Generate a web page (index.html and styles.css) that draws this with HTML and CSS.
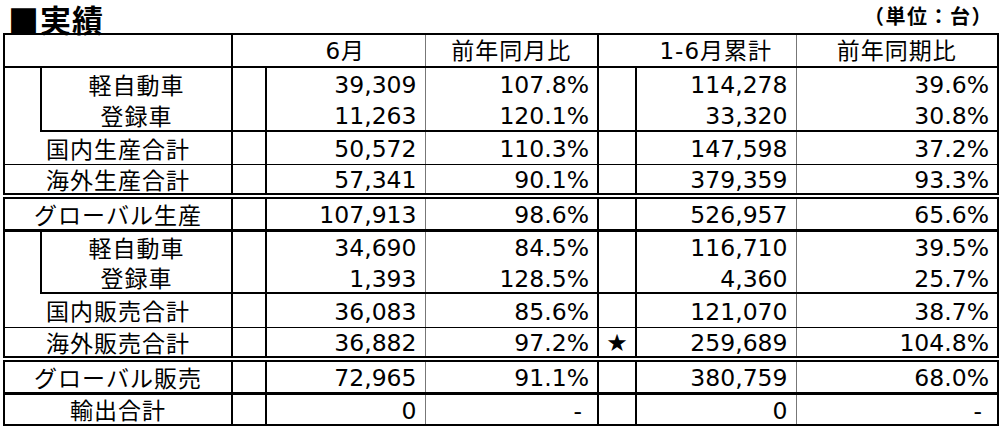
FILE: index.html
```html
<!DOCTYPE html>
<html lang="ja">
<head>
<meta charset="utf-8">
<title>実績</title>
<link rel="stylesheet" href="styles.css">
</head>
<body>
<div class="page">
  <div class="head">
    <h1 class="title">■実績</h1>
    <div class="unit">（単位：台）</div>
  </div>
  <table class="results">
    <colgroup>
      <col class="c-indent">
      <col class="c-label">
      <col class="c-gap">
      <col class="c-val">
      <col class="c-pct">
      <col class="c-star">
      <col class="c-cum">
      <col class="c-cpct">
    </colgroup>
    <thead>
      <tr class="h-33 sep-grp">
        <th colspan="2" class="lbl"></th>
        <th class="gap-h"></th>
        <th class="hd val">6月</th>
        <th class="hd pct">前年同月比</th>
        <th class="gap-h2"></th>
        <th class="hd val">1-6月累計</th>
        <th class="hd last">前年同期比</th>
      </tr>
    </thead>
    <tbody>
      <tr class="h-32">
        <td rowspan="2" class="indent"></td>
        <td class="lbl">軽自動車</td>
        <td rowspan="2" class="gap grp-bottom"></td>
        <td class="num val">39,309</td>
        <td class="num pct">107.8%</td>
        <td rowspan="2" class="gap grp-bottom"></td>
        <td class="num val">114,278</td>
        <td class="num last">39.6%</td>
      </tr>
      <tr class="h-32 sep-grp">
        <td class="lbl">登録車</td>
        <td class="num val">11,263</td>
        <td class="num pct">120.1%</td>
        <td class="num val">33,320</td>
        <td class="num last">30.8%</td>
      </tr>
      <tr class="h-33 sep-thin">
        <td colspan="2" class="lbl">国内生産合計</td>
        <td class="gap"></td>
        <td class="num val">50,572</td>
        <td class="num pct">110.3%</td>
        <td class="gap"></td>
        <td class="num val">147,598</td>
        <td class="num last">37.2%</td>
      </tr>
      <tr class="h-32 sep-double">
        <td colspan="2" class="lbl">海外生産合計</td>
        <td class="gap"></td>
        <td class="num val">57,341</td>
        <td class="num pct">90.1%</td>
        <td class="gap"></td>
        <td class="num val">379,359</td>
        <td class="num last">93.3%</td>
      </tr>
      <tr class="h-34 sep-thick">
        <td colspan="2" class="lbl">グローバル生産</td>
        <td class="gap"></td>
        <td class="num val">107,913</td>
        <td class="num pct">98.6%</td>
        <td class="gap"></td>
        <td class="num val">526,957</td>
        <td class="num last">65.6%</td>
      </tr>
      <tr class="h-32">
        <td rowspan="2" class="indent"></td>
        <td class="lbl">軽自動車</td>
        <td rowspan="2" class="gap grp-bottom"></td>
        <td class="num val">34,690</td>
        <td class="num pct">84.5%</td>
        <td rowspan="2" class="gap grp-bottom"></td>
        <td class="num val">116,710</td>
        <td class="num last">39.5%</td>
      </tr>
      <tr class="h-31 sep-grp">
        <td class="lbl">登録車</td>
        <td class="num val">1,393</td>
        <td class="num pct">128.5%</td>
        <td class="num val">4,360</td>
        <td class="num last">25.7%</td>
      </tr>
      <tr class="h-34 sep-thin">
        <td colspan="2" class="lbl">国内販売合計</td>
        <td class="gap"></td>
        <td class="num val">36,083</td>
        <td class="num pct">85.6%</td>
        <td class="gap"></td>
        <td class="num val">121,070</td>
        <td class="num last">38.7%</td>
      </tr>
      <tr class="h-32 sep-double">
        <td colspan="2" class="lbl">海外販売合計</td>
        <td class="gap"></td>
        <td class="num val">36,882</td>
        <td class="num pct">97.2%</td>
        <td class="gap mark">★</td>
        <td class="num val">259,689</td>
        <td class="num last">104.8%</td>
      </tr>
      <tr class="h-34 sep-thick">
        <td colspan="2" class="lbl">グローバル販売</td>
        <td class="gap"></td>
        <td class="num val">72,965</td>
        <td class="num pct">91.1%</td>
        <td class="gap"></td>
        <td class="num val">380,759</td>
        <td class="num last">68.0%</td>
      </tr>
      <tr class="h-32">
        <td colspan="2" class="lbl">輸出合計</td>
        <td class="gap"></td>
        <td class="num val">0</td>
        <td class="num pct dash">-</td>
        <td class="gap"></td>
        <td class="num val">0</td>
        <td class="num last dash">-</td>
      </tr>
    </tbody>
  </table>
</div>
</body>
</html>
```

FILE: styles.css
```css
html, body {
  margin: 0;
  padding: 0;
  background: #ffffff;
  color: #000000;
}

.page {
  width: 1000px;
  height: 430px;
  padding-left: 3px;
  box-sizing: border-box;
  overflow: hidden;
}

.head {
  display: flex;
  justify-content: space-between;
  align-items: flex-end;
  width: 994px;
}

.title {
  margin: 0 0 -5px 5px;
  font-family: "Noto Sans CJK JP", sans-serif;
  font-weight: 700;
  font-size: 31px;
  line-height: 38px;
  letter-spacing: 1px;
}

.unit {
  font-family: "Noto Sans CJK JP", sans-serif;
  font-weight: 700;
  font-size: 20px;
  line-height: 29px;
  letter-spacing: 1.5px;
  margin-right: 4px;
  margin-bottom: 3px;
}

.results {
  border-collapse: collapse;
  table-layout: fixed;
  width: 994px;
  border: 2px solid #000;
}

.c-indent { width: 37px; }
.c-label { width: 191px; }
.c-gap { width: 34px; }
.c-val { width: 159px; }
.c-pct { width: 173px; }
.c-star { width: 38px; }
.c-cum { width: 160px; }
.c-cpct { width: 202px; }

.results th,
.results td {
  padding: 0;
  font-weight: 400;
  white-space: nowrap;
  line-height: 24px;
  vertical-align: middle;
}

.h-31 { height: 31px; }
.h-32 { height: 32px; }
.h-33 { height: 33px; }
.h-34 { height: 34px; }

.lbl {
  font-family: "Noto Sans CJK JP", sans-serif;
  font-size: 23px;
  letter-spacing: 1px;
  text-align: center;
  border-right: 2px solid #000;
  padding-top: 2px;
}

.hd {
  font-family: "DejaVu Sans", "Noto Sans CJK JP", sans-serif;
  font-size: 23px;
  letter-spacing: 1px;
  text-align: center;
  padding-top: 2px;
}

.indent {
  border-right: 2px solid #000;
}

.gap {
  border-right: 2px solid #000;
}

.grp-bottom {
  border-bottom: 2px solid #000;
}

.results td.num {
  font-family: "DejaVu Sans", "Noto Sans CJK JP", sans-serif;
  font-size: 23.5px;
  text-align: right;
  padding-right: 8px;
  padding-top: 3px;
}

.val {
  border-right: 1px solid #777;
}

.pct {
  border-right: 2px solid #000;
}

.last {
  border-right: 2px solid #000;
}

.results td.dash {
  padding-right: 15px;
}

.results td.mark {
  font-family: "DejaVu Sans", sans-serif;
  font-size: 24px;
  text-align: center;
  padding-top: 3px;
}

.sep-grp > th,
.sep-grp > td {
  border-bottom: 2px solid #000;
}

.sep-thin > td {
  border-bottom: 1px solid #000;
}

.sep-double > td {
  border-bottom: 6px double #000;
}

.sep-thick > td {
  border-bottom: 3px solid #000;
}

.results th.gap-h {
  border-right: none;
}

.results th.gap-h2 {
  border-right: none;
}

.results thead th.pct {
  border-right: 2px solid #000;
}

.results thead th.lbl + th {
  border-left: 2px solid #000;
}
```
